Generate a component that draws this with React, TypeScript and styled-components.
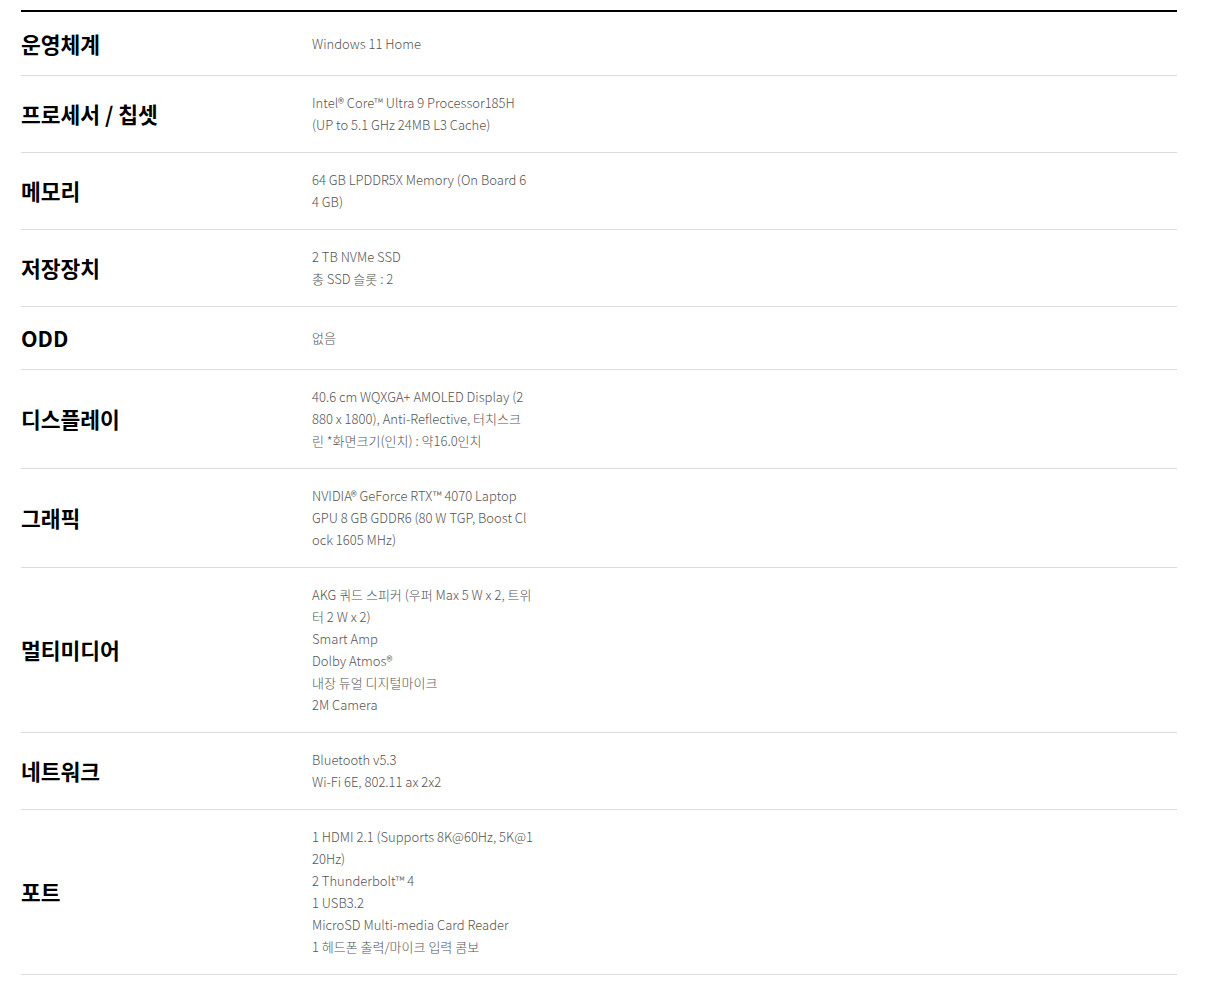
import React from "react";
import styled, { createGlobalStyle } from "styled-components";

const Global = createGlobalStyle`
  html, body { margin: 0; padding: 0; background: #fff; }
  body { font-family: "Noto Sans CJK KR", "Noto Sans", sans-serif; }
`;

const Table = styled.dl`
  margin: 10px 0 0 21px;
  width: 1156px;
  border-top: 2px solid #000;
  padding: 0;
`;

const Row = styled.div`
  display: flex;
  align-items: center;
  border-bottom: 1px solid #ddd;
  min-height: 62px;

  &:first-child {
    min-height: 63px;
  }
`;

const Label = styled.dt`
  width: 291px;
  flex: none;
  margin: 0;
  font-family: "Noto Sans CJK KR", sans-serif;
  font-weight: 700;
  font-size: 21.5px;
  line-height: 30px;
  color: #000;
`;

const Value = styled.dd`
  margin: 0;
  padding: 16px 0;
  font-family: "Noto Sans CJK KR", sans-serif;
  font-weight: 300;
  font-size: 13px;
  line-height: 22px;
  color: #555;
  white-space: nowrap;
`;

const Line = styled.div``;

const specs: [string, string[]][] = [
  ["운영체계", ["Windows 11 Home"]],
  ["프로세서 / 칩셋", ["Intel® Core™ Ultra 9 Processor185H", "(UP to 5.1 GHz 24MB L3 Cache)"]],
  ["메모리", ["64 GB LPDDR5X Memory (On Board 6", "4 GB)"]],
  ["저장장치", ["2 TB NVMe SSD", "총 SSD 슬롯 : 2"]],
  ["ODD", ["없음"]],
  ["디스플레이", ["40.6 cm WQXGA+ AMOLED Display (2", "880 x 1800), Anti-Reflective, 터치스크", "린 *화면크기(인치) : 약16.0인치"]],
  ["그래픽", ["NVIDIA® GeForce RTX™ 4070 Laptop", "GPU 8 GB GDDR6 (80 W TGP, Boost Cl", "ock 1605 MHz)"]],
  ["멀티미디어", ["AKG 쿼드 스피커 (우퍼 Max 5 W x 2, 트위", "터 2 W x 2)", "Smart Amp", "Dolby Atmos®", "내장 듀얼 디지털마이크", "2M Camera"]],
  ["네트워크", ["Bluetooth v5.3", "Wi-Fi 6E, 802.11 ax 2x2"]],
  ["포트", ["1 HDMI 2.1 (Supports 8K@60Hz, 5K@1", "20Hz)", "2 Thunderbolt™ 4", "1 USB3.2", "MicroSD Multi-media Card Reader", "1 헤드폰 출력/마이크 입력 콤보"]],
];

export default function App() {
  return (
    <>
      <Global />
      <Table>
        {specs.map(([label, lines]) => (
          <Row key={label}>
            <Label>{label}</Label>
            <Value>
              {lines.map((l, i) => (
                <Line key={i}>{l}</Line>
              ))}
            </Value>
          </Row>
        ))}
      </Table>
    </>
  );
}
